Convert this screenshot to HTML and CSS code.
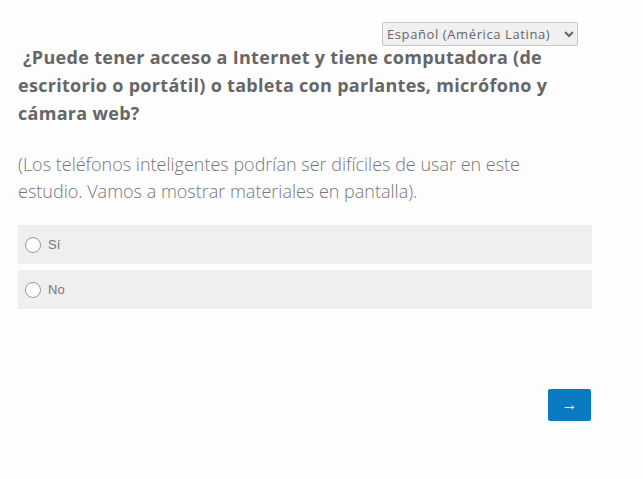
FILE: index.html
```html
<!DOCTYPE html>
<html lang="es">
<head>
  <meta charset="UTF-8" />
  <title>Encuesta</title>
  <link rel="stylesheet" href="styles.css">
</head>
<body>
  <div class="survey">
    <div class="lang-bar">
      <select class="lang-select">
        <option>Español (América Latina)</option>
      </select>
    </div>

    <!-- Question -->
    <h2 class="question">&nbsp;¿Puede tener acceso a Internet y tiene computadora (de escritorio o portátil) o tableta con parlantes, micrófono y cámara web?</h2>
    <p class="note">(Los teléfonos inteligentes podrían ser difíciles de usar en este estudio. Vamos a mostrar materiales en pantalla).</p>

    <div class="choices">
      <label class="choice"><span class="radio"></span>Sí</label>
      <label class="choice"><span class="radio"></span>No</label>
    </div>

    <div class="nav-row">
      <button class="next-btn">&#8594;</button>
    </div>
  </div>
</body>
</html>
```

FILE: styles.css
```css
body {
  margin: 0;
  background: #fdfdfd;
  font-family: "Open Sans", sans-serif;
}
.survey {
  width: 574px;
  padding: 22px 0 0 18px;
}
.lang-bar {
  display: flex;
  justify-content: flex-end;
  margin-right: 14px;
}
.lang-select {
  width: 196px;
  height: 24px;
  font-family: "Open Sans", sans-serif;
  font-size: 13px;
  letter-spacing: 0.6px;
  color: #666;
  background: #f0f0f0;
  border: 1px solid #c8c8c8;
  border-radius: 2px;
}
.question {
  margin: -3px 0 0 0;
  font-size: 18px;
  letter-spacing: 0.3px;
  line-height: 28px;
  font-weight: 700;
  color: #666;
}
.note {
  max-width: 515px;
  margin: 24px 0 20px 0;
  font-size: 18px;
  font-weight: 300;
  line-height: 27px;
  color: #777;
}
.choices {
  display: flex;
  flex-direction: column;
  gap: 6px;
}
.choice {
  display: flex;
  align-items: center;
  height: 39px;
  padding-left: 7px;
  background: #efefef;
  font-family: "Liberation Sans", Arial, sans-serif;
  font-size: 13px;
  color: #777;
}
.radio {
  width: 14px;
  height: 14px;
  border: 1px solid #999;
  border-radius: 50%;
  background: #fff;
  margin-right: 7px;
}
.nav-row {
  display: flex;
  justify-content: flex-end;
  margin: 80px 1px 0 0;
}
.next-btn {
  width: 43px;
  height: 32px;
  background: #0a7bc2;
  color: #fff;
  border: none;
  border-radius: 2px;
  font-size: 16px;
  cursor: pointer;
}
```
